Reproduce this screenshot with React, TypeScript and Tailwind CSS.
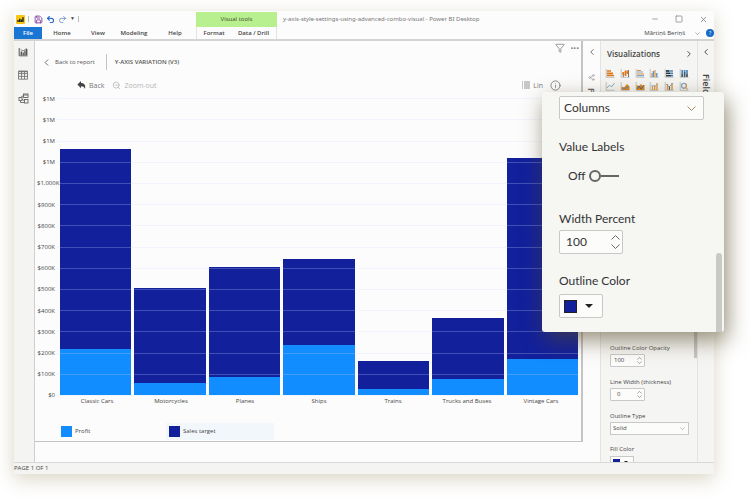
import React from "react";
import { ChevronLeft, ChevronRight, Filter, Info, Minus, Redo2, Save, Share2, Square, Undo2, X, ZoomOut } from "lucide-react";

const TICKS = ["$1M", "$1M", "$1M", "$1M", "$1,000K", "$900K", "$800K", "$700K", "$600K", "$500K", "$400K", "$300K", "$200K", "$100K", "$0"];

const BARS = [
  { name: "Classic Cars", total: 1162, profit: 218 },
  { name: "Motorcycles", total: 503, profit: 57 },
  { name: "Planes", total: 605, profit: 86 },
  { name: "Ships", total: 643, profit: 236 },
  { name: "Trains", total: 162, profit: 29 },
  { name: "Trucks and Buses", total: 362, profit: 74 },
  { name: "Vintage Cars", total: 1115, profit: 172 },
];

function Caret({ up, className }: { up?: boolean; className: string }) {
  return (
    <svg viewBox="0 0 9 5" className={className} fill="none" stroke="currentColor" strokeWidth="1" aria-hidden="true">
      <path d={up ? "M.5 4.5l4-4 4 4" : "M.5.5l4 4 4-4"} />
    </svg>
  );
}

function Logo() {
  return (
    <svg viewBox="0 0 9 9" className="size-[9px]" aria-hidden="true">
      <rect width="9" height="9" rx="1" fill="#f9c513" />
      <path d="M2 7V5M3.7 7V3.8M5.4 7V4.4M7 7V2.2" stroke="#222" strokeWidth="1.4" />
    </svg>
  );
}

function ReportIcon() {
  return (
    <svg viewBox="0 0 10 10" className="size-[10px]" fill="none" stroke="#555" aria-hidden="true">
      <path d="M1.2 1v7.8H9.5" />
      <path d="M3.3 8V4.5M5.2 8V5.5M7 8V3.5M8.7 8V2" strokeWidth="1.4" />
      <path d="M2.5 2.5 5 4l3.5-2.5" strokeWidth=".7" />
    </svg>
  );
}

function DataIcon() {
  return (
    <svg viewBox="0 0 10 10" className="size-[10px]" fill="none" stroke="#777" strokeWidth=".9" aria-hidden="true">
      <path d="M.5 1.2h9v8h-9zM.5 3.6h9M.5 6.4h9M3.5 1v8M6.5 1v8" />
      <path d="M.5 1.5h9" strokeWidth="1.4" />
    </svg>
  );
}

function ModelIcon() {
  return (
    <svg viewBox="0 0 11 11" className="size-[11px]" fill="none" stroke="#666" strokeWidth=".9" aria-hidden="true">
      <rect x="5.5" y="1" width="4.5" height="3.5" />
      <rect x="6.5" y="6.5" width="3.5" height="3.5" />
      <rect x="1" y="4.5" width="3" height="3" />
      <path d="M5.5 2.5 2.5 4.5M4 6l2.5 2M2.5 7.5v2h4M5.5 2h4.5" />
    </svg>
  );
}

const GALLERY = [
  <><path d="M2 3h4M2 5.3h6M2 7.5h7" stroke="#e0761c" strokeWidth="1.7" /></>,
  <><path d="M3.3 9V5M8.5 9V2" stroke="#777" /><path d="M5.5 8V2.5M7.5 6V2.5M3.3 7V4" stroke="#e0761c" strokeWidth="1.7" /></>,
  <><path d="M2 2.5h4M2 6h7" stroke="#e0913c" strokeWidth="1.2" /><path d="M2 4h6M2 7.7h7" stroke="#7aa6cf" strokeWidth="1.2" /></>,
  <><path d="M3 9V5M6 9V2" stroke="#e0913c" strokeWidth="1.2" /><path d="M4.3 9V3M7.8 9V5" stroke="#5f95c8" strokeWidth="1.4" /></>,
  <><path d="M2 3h7M2 5.3h7M2 7.6h7" stroke="#4d86b8" strokeWidth="1.6" /><path d="M2 3h3M2 5.3h4M2 7.6h5" stroke="#333" strokeWidth="1.3" /></>,
  <><path d="M3.2 9V2M5.6 9V2M8 9V2" stroke="#4d86b8" strokeWidth="1.7" /><path d="M3.2 9V6M5.6 9V4M8 9V6" stroke="#555" strokeWidth="1.3" /></>,
  <><path d="m2 7 2.5-3 2 2 3-4" stroke="#8baac4" fill="none" /></>,
  <><path d="M1.5 9V5.5l2.5 1 3-3.5 2.5 2.5V9z" fill="#e0851f" /><path d="m2 7 3 .5 4-2" stroke="#5f87ad" fill="none" /></>,
  <><path d="M1.5 9V4l2.5 1 2-2 2 2 1.5-1v5z" fill="#e0851f" /><path d="m2 8 2-3 2 3 3-4" stroke="#426b91" fill="none" /></>,
  <><path d="M3.5 9V5M5.7 9V4M8 9V2" stroke="#e29b50" strokeWidth="1.4" /><path d="m2 5 2-1 2 2 3-3" stroke="#8baac4" fill="none" strokeWidth=".7" /></>,
  <><path d="M3.5 9V3M8 9V2" stroke="#e0913c" strokeWidth="1.4" /><path d="M5.5 9V5" stroke="#555" strokeWidth="1.2" /><path d="m2 3 3 3 4-4" stroke="#6f9cc5" fill="none" strokeWidth=".8" /></>,
  <><circle cx="5" cy="4.8" r="2.4" fill="none" stroke="#8aa9c2" strokeWidth="1.4" /><path d="M6 6l3 2.5M7.5 3v3" stroke="#e0913c" fill="none" /></>,
];

function Stepper({ id, value, big }: { id: string; value: string; big?: boolean }) {
  const box = big ? "h-6 w-16 rounded-[2px] pl-[6px] pr-[2px]" : "h-[13px] w-[35px] rounded-[1px] pl-[3px] pr-[2px]";
  const text = big ? "text-[12px]" : "text-[6px]";
  const caret = big ? "h-[5px] w-[9px]" : "h-[3px] w-[5px]";
  return (
    <div className={`flex items-center border border-[#c8c8c6] bg-[#fcfcfb] ${box}`}>
      <input id={id} defaultValue={value} className={`w-full min-w-0 flex-1 bg-transparent outline-none ${text}`} />
      <div className="flex h-full flex-col items-center justify-evenly text-[#666]">
        <button aria-label="Increase"><Caret up className={caret} /></button>
        <button aria-label="Decrease"><Caret className={caret} /></button>
      </div>
    </div>
  );
}

function TitleBar() {
  return (
    <div className="flex h-4 items-center">
      <div className="flex w-[182px] items-center gap-[3px] pl-[2px]">
        <Logo />
        <span className="h-[6px] w-px bg-[#bbb]" />
        <button aria-label="Save" className="ml-[2px]"><Save className="size-[9px] text-[#8442a5]" strokeWidth={2.4} /></button>
        <button aria-label="Undo"><Undo2 className="size-[9px] text-[#2f6fc4]" strokeWidth={3} /></button>
        <button aria-label="Redo"><Redo2 className="size-[9px] text-[#6f94c4]" strokeWidth={2.4} /></button>
        <button aria-label="Customize" className="text-[5px] text-[#444]">▼</button>
        <span className="h-[6px] w-px bg-[#bbb]" />
      </div>
      <div className="mt-px flex h-[15px] w-[81px] items-center justify-center bg-[#b9f08f] text-[6px] font-medium text-[#35472b]">Visual tools</div>
      <div className="ml-[6px] flex-1 whitespace-nowrap font-['Noto_Sans',sans-serif] text-[6px] text-[#777]">y-axis-style-settings-using-advanced-combo-visual - Power BI Desktop</div>
      <div className="flex items-center gap-4 pr-[6px] text-[#777]">
        <button aria-label="Minimize"><Minus className="size-[8px]" strokeWidth={2} /></button>
        <button aria-label="Maximize"><Square className="size-[8px]" strokeWidth={2} /></button>
        <button aria-label="Close"><X className="size-[9px]" strokeWidth={2} /></button>
      </div>
    </div>
  );
}

function Ribbon() {
  return (
    <div className="flex h-[14px] items-stretch border-b-2 border-[#d3d3d3] text-[6px] font-semibold text-[#444]">
      <button className="w-7 bg-[#1b75d2] text-white">File</button>
      <button className="w-10">Home</button>
      <button className="w-8">View</button>
      <button className="w-10">Modeling</button>
      <button className="w-[42px]">Help</button>
      <div className="flex w-[81px] border-x border-[#e2e2e2]">
        <button className="w-[34px]">Format</button>
        <button className="flex-1">Data / Drill</button>
      </div>
      <div className="flex flex-1 items-center justify-end font-medium">
        <span>Mārtiņš Beriņš</span>
        <Caret className="ml-[10px] h-[3px] w-[5px] text-[#777]" />
        <button aria-label="Help" className="ml-[6px] size-[8px] rounded-full bg-[#1769c8] text-[5px] leading-[8px] text-white">?</button>
      </div>
    </div>
  );
}

function Chart() {
  return (
    <div className="flex min-h-0 flex-1 pr-[3px]">
      <div className="flex w-[25px] flex-col text-[6px] text-[#444]">
        {TICKS.map((t, i) => (
          <div key={i} className="relative z-10 flex flex-1 items-center whitespace-nowrap pl-[2px] pr-[5px] leading-none [justify-content:safe_end]">{t}</div>
        ))}
      </div>
      <div className="relative flex-1">
        <div className="absolute inset-0 flex items-end gap-[3px] pb-[11px] pt-[10px]">
          {BARS.map((b) => (
            <div key={b.name} className="flex h-full flex-1 flex-col justify-end">
              <div className="flex flex-col justify-end bg-[#12209c]" style={{ height: `${b.total / 14}%` }}>
                <div className="bg-[#118dff]" style={{ height: `${(b.profit / b.total) * 100}%` }} />
              </div>
            </div>
          ))}
        </div>
        <div className="absolute inset-y-0 -left-[3px] right-0 flex flex-col">
          {TICKS.map((t, i) => (
            <div key={i} className="flex flex-1 items-center"><span className="h-px w-full bg-[#d4daff]/25" /></div>
          ))}
        </div>
      </div>
    </div>
  );
}

function Visual() {
  return (
    <main className="mb-5 flex min-w-0 flex-1 flex-col border-b border-r-2 border-[#c4c4c4]">
      <div className="flex h-[13px] items-center justify-end gap-[5px] pr-[2px] text-[#777]">
        <button aria-label="Filters"><Filter className="size-[10px]" strokeWidth={1.8} /></button>
        <button aria-label="More options" className="text-[10px] font-bold leading-none">···</button>
      </div>
      <div className="flex h-4 items-center pl-[6px] text-[6px] text-[#555]">
        <button className="flex items-center gap-[3px]"><ChevronLeft className="size-[11px]" strokeWidth={1.8} />Back to report</button>
        <span className="ml-[11px] h-4 w-px bg-[#c4c4c4]" />
        <h1 className="ml-2 font-semibold">Y-AXIS VARIATION (V3)</h1>
      </div>
      <div className="-mb-3 flex h-[30px] items-center pl-[42px] pr-5 text-[7px] leading-[9px] text-[#777]">
        <button className="flex items-center gap-[3px]">
          <svg viewBox="0 0 9 8" className="h-[8px] w-[9px]" aria-hidden="true"><path d="M4 0v2c3 0 5 2 4 6C7.4 6 6 5.3 4 5.3V7.3L.4 3.6z" fill="#444" /></svg>
          Back
        </button>
        <button className="ml-2 flex items-center gap-[3px] text-[#b5b5b5]"><ZoomOut className="size-[9px]" strokeWidth={2} />Zoom-out</button>
        <div className="flex-1" />
        <button className="flex items-center gap-[3px]">
          <svg viewBox="0 0 8 8" className="size-[8px]" fill="none" stroke="#888" strokeWidth=".9" aria-hidden="true"><path d="M0 1h1M2 1h6M0 3h1M2 3h6M0 5h1M2 5h6M0 7h1M2 7h6" /></svg>
          Lin
        </button>
        <button aria-label="Information" className="ml-[7px]"><Info className="size-[11px]" strokeWidth={1.8} /></button>
      </div>
      <Chart />
      <div className="flex pl-[25px] pr-[3px] text-[6px] leading-[9px] text-[#444]">
        {BARS.map((b) => <div key={b.name} className="-mt-[9px] flex-1 whitespace-nowrap text-center">{b.name}</div>)}
      </div>
      <div className="mb-px mt-[17px] flex h-[17px] items-center pl-[26px] text-[6px] text-[#444]">
        <button className="flex w-[105px] items-center gap-[3px]"><span className="size-[11px] bg-[#118dff]" />Profit</button>
        <button className="flex h-full w-[108px] items-center gap-[3px] bg-[#f2f7fc] pl-[3px]"><span className="size-[11px] bg-[#12209c]" />Sales target</button>
      </div>
    </main>
  );
}

function VisualizationsPane() {
  return (
    <aside className="flex w-[98px] flex-col overflow-hidden border-x border-[#e3e3e1] bg-[#f5f5f3] text-[#444]">
      <div className="flex h-[25px] items-center justify-between pl-[6px] pr-[3px] text-[8px] font-semibold">
        <h2>Visualizations</h2>
        <button aria-label="Collapse"><ChevronRight className="size-[10px]" strokeWidth={2.2} /></button>
      </div>
      <div className="grid grid-cols-6 gap-y-[3px] pl-1 pr-[3px] pt-[2px]">
        {GALLERY.map((g, i) => (
          <button key={i} aria-label={`Visual type ${i + 1}`}>
            <svg viewBox="0 0 10 10" className="size-[10px]"><path d="M1.2 1v8.3h8.3" fill="none" stroke="#b5b5b5" strokeWidth=".8" />{g}</svg>
          </button>
        ))}
      </div>
      <div className="flex flex-1 justify-end"><div className="mt-auto h-[170px] w-[3px] bg-[#c5c5c3]" /></div>
      <div className="-mt-[14px] flex flex-col pl-[9px] pr-2 text-[6px] leading-[9px]">
        <label htmlFor="opacity" className="mb-px">Outline Color Opacity</label>
        <Stepper id="opacity" value="100" />
        <label htmlFor="line" className="mb-px mt-[11px]">Line Width (thickness)</label>
        <Stepper id="line" value="  0" />
        <label htmlFor="outline" className="mb-px mt-[11px]">Outline Type</label>
        <div className="relative">
          <select id="outline" className="block h-[13px] w-full appearance-none border border-[#c8c8c6] bg-[#fcfcfb] pl-[2px]"><option>Solid</option></select>
          <Caret className="pointer-events-none absolute right-1 top-[5px] h-[3px] w-[5px] text-[#888]" />
        </div>
        <label htmlFor="fill" className="mt-[10px]">Fill Color</label>
        <div className="h-[8px] overflow-hidden">
          <button id="fill" className="mt-[2px] flex h-3 w-6 items-center gap-1 border border-[#c8c8c6] bg-[#fcfcfb] pl-[2px]">
            <span className="size-[7px] bg-[#12209c]" />
            <svg viewBox="0 0 8 4" className="h-[2px] w-1" aria-hidden="true"><path d="M0 0h8L4 4z" fill="#222" /></svg>
          </button>
        </div>
      </div>
    </aside>
  );
}

function ZoomPanel() {
  return (
    <section aria-label="Column settings" className="absolute right-[26px] top-[92px] w-[182px] rounded-[3px] bg-[#f6f6f3] pb-[14px] pl-[17px] pr-5 pt-1 font-['Lato','Noto_Sans',sans-serif] text-[12px] leading-4 text-[#333] shadow-[3px_8px_22px_rgba(84,70,36,0.6)]">
      <div className="relative">
        <select aria-label="Series type" className="block h-6 w-full appearance-none rounded-[2px] border border-[#c8c8c6] bg-[#fcfcfb] pl-1"><option>Columns</option></select>
        <Caret className="pointer-events-none absolute right-2 top-[10px] h-[5px] w-[9px] text-[#a58a68]" />
      </div>
      <label htmlFor="labels" className="mt-[19px] block">Value Labels</label>
      <div className="mt-[13px] flex items-center gap-1 pl-[9px]">
        <span className="w-[17px]">Off</span>
        <div className="relative flex h-3 w-[30px] items-center">
          <input id="labels" type="checkbox" role="switch" className="absolute inset-0 z-10 appearance-none" />
          <span className="size-3 rounded-full border-2 border-[#666]" />
          <span className="h-[2px] flex-1 bg-[#666]" />
        </div>
      </div>
      <label htmlFor="width" className="mb-[3px] mt-[27px] block">Width Percent</label>
      <Stepper id="width" value="100" big />
      <label htmlFor="color" className="mb-[5px] mt-[19px] block">Outline Color</label>
      <button id="color" className="flex h-6 w-11 items-center gap-2 rounded-[2px] border border-[#c8c8c6] bg-[#fcfcfb] pl-1">
        <span className="size-[13px] border border-[#222] bg-[#12209c]" />
        <svg viewBox="0 0 8 4" className="h-1 w-2" aria-hidden="true"><path d="M0 0h8L4 4z" fill="#222" /></svg>
      </button>
      <div className="absolute bottom-0 right-[2px] h-[79px] w-[6px] rounded-t-[3px] bg-[#c9c9c7]" />
    </section>
  );
}

export default function App() {
  return (
    <div className="relative flex h-screen flex-col overflow-hidden bg-white pb-[26px] pl-[14px] pr-9 pt-[11px] font-['Open_Sans','Noto_Sans',sans-serif]">
      <div className="flex min-h-0 flex-1 flex-col bg-[#fcfcfc] shadow-[0_5px_18px_rgba(120,100,40,0.28)]">
        <TitleBar />
        <Ribbon />
        <div className="flex min-h-0 flex-1">
          <nav className="flex w-[21px] flex-col items-center gap-[13px] border-r border-[#cfcfcf] bg-[#f4f4f2] pr-[2px] pt-[6px]">
            <button aria-label="Report"><ReportIcon /></button>
            <button aria-label="Data"><DataIcon /></button>
            <button aria-label="Model"><ModelIcon /></button>
          </nav>
          <Visual />
          <div className="flex w-[17px] flex-col items-center pt-[6px] text-[#666]">
            <button aria-label="Expand filters"><ChevronLeft className="size-[10px]" strokeWidth={2.2} /></button>
            <Share2 className="mt-[17px] size-[7px] text-[#999]" />
            <span className="mt-[7px] text-[9px] font-semibold leading-none [writing-mode:vertical-rl]">Filters</span>
          </div>
          <VisualizationsPane />
          <div className="flex w-4 flex-col items-center bg-[#f5f5f3] pt-[6px] text-[#444]">
            <button aria-label="Expand fields"><ChevronLeft className="size-[10px]" strokeWidth={2.2} /></button>
            <span className="mt-[17px] text-[9px] font-semibold leading-none [writing-mode:vertical-rl]">Fields</span>
          </div>
        </div>
        <footer className="h-3 border-t border-[#d8d8d6] bg-[#f4f4f2] text-[6px] leading-[11px] text-[#444]">PAGE 1 OF 1</footer>
      </div>
      <ZoomPanel />
    </div>
  );
}
